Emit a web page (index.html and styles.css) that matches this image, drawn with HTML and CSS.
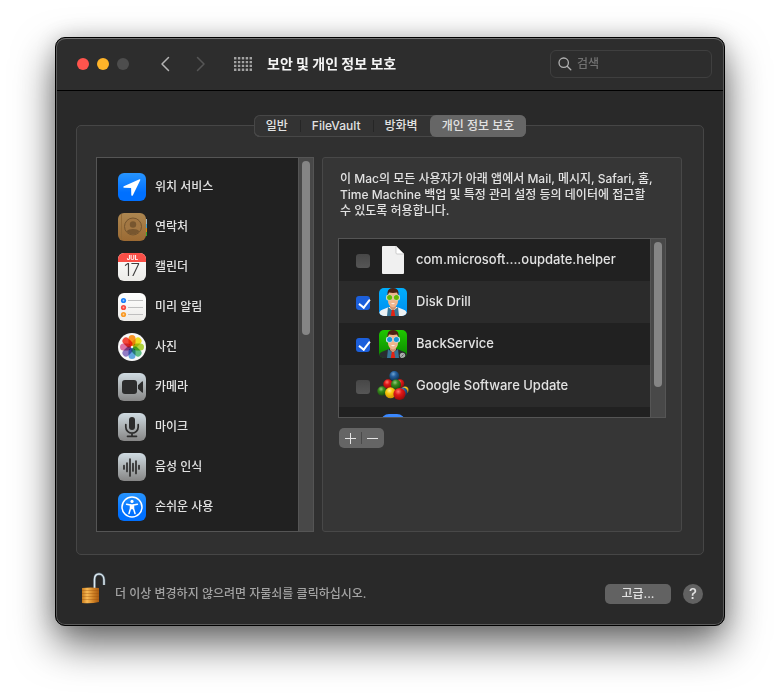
FILE: index.html
```html
<!DOCTYPE html>
<html lang="ko">
<head>
<meta charset="utf-8">
<title>보안 및 개인 정보 보호</title>
<link rel="stylesheet" href="styles.css">
</head>
<body>
<svg class="defs" aria-hidden="true">
  <defs>
    <linearGradient id="blue" x2="0" y2="1"><stop stop-color="#2795ff"/><stop offset=".7" stop-color="#0070ff"/></linearGradient>
    <linearGradient id="steel" x2="0" y2="1"><stop stop-color="#cfdbe2"/><stop offset=".5" stop-color="#abb0b2"/><stop offset="1" stop-color="#868686"/></linearGradient>
    <linearGradient id="paper" x2="0" y2="1"><stop stop-color="#fff"/><stop offset="1" stop-color="#ecebe8"/></linearGradient>
    <linearGradient id="leather" x2="0" y2="1"><stop stop-color="#ac8650"/><stop offset="1" stop-color="#9b6a33"/></linearGradient>
    <linearGradient id="sky" x2="0" y2="1"><stop stop-color="#00aefc"/><stop offset="1" stop-color="#008df0"/></linearGradient>
    <linearGradient id="grass" x2="0" y2="1"><stop stop-color="#1fc700"/><stop offset="1" stop-color="#0a8600"/></linearGradient>
    <linearGradient id="brass" x2="1" y2="0"><stop stop-color="#c67a1d"/><stop offset=".3" stop-color="#f9b954"/><stop offset=".65" stop-color="#d18427"/><stop offset="1" stop-color="#a85a10"/></linearGradient>
    <radialGradient id="ball-blue" cx=".4" cy=".3" r=".7"><stop stop-color="#6fa3d0"/><stop offset=".4" stop-color="#245f9e"/><stop offset="1" stop-color="#0f3155"/></radialGradient>
    <radialGradient id="ball-red" cx=".4" cy=".3" r=".7"><stop stop-color="#ff7a6c"/><stop offset=".4" stop-color="#e01818"/><stop offset="1" stop-color="#970a0a"/></radialGradient>
    <radialGradient id="ball-green" cx=".4" cy=".3" r=".7"><stop stop-color="#98c97a"/><stop offset=".4" stop-color="#378a1d"/><stop offset="1" stop-color="#1a4f0d"/></radialGradient>
    <radialGradient id="ball-yellow" cx=".4" cy=".3" r=".7"><stop stop-color="#ffee98"/><stop offset=".4" stop-color="#fbc90e"/><stop offset="1" stop-color="#cf9302"/></radialGradient>
    <clipPath id="tile"><rect width="28" height="28" rx="5"/></clipPath>
  </defs>
</svg>

<main class="window">
  <header class="titlebar">
    <div class="lights">
      <button class="light light-close" type="button" aria-label="닫기"></button>
      <button class="light light-min" type="button" aria-label="최소화"></button>
      <button class="light light-zoom" type="button" aria-label="확대" disabled></button>
    </div>
    <nav class="history">
      <button class="plain" type="button" aria-label="뒤로"><svg width="10" height="16" viewBox="0 0 10 16"><path d="M8.500 1.500 2 8l6.500 6.500" fill="none" stroke="#b4b4b4" stroke-width="1.500" stroke-linecap="round" stroke-linejoin="round"/></svg></button>
      <button class="plain" type="button" aria-label="앞으로" disabled><svg width="10" height="16" viewBox="0 0 10 16"><path d="M1.500 1.500 8 8l-6.500 6.500" fill="none" stroke="#565656" stroke-width="1.500" stroke-linecap="round" stroke-linejoin="round"/></svg></button>
    </nav>
    <button class="plain" type="button" aria-label="모두 보기">
      <svg width="18" height="14" viewBox="0 0 18 14"><path d="M0 1.300h18M0 5.100h18M0 8.900h18M0 12.700h18" stroke="#a3a3a3" stroke-width="2.400" stroke-dasharray="2.400 1.500"/></svg>
    </button>
    <h1 class="title">보안 및 개인 정보 보호</h1>
    <label class="search">
      <svg width="14" height="14" viewBox="0 0 14 14" fill="none" stroke="#b0b0b0" stroke-width="1.300" stroke-linecap="round"><circle cx="5.700" cy="5.700" r="4.700"/><path d="m9.200 9.200 3.600 3.600"/></svg>
      <input type="search" placeholder="검색" aria-label="검색">
    </label>
  </header>

  <div class="content">
    <div class="tabs" role="tablist">
      <button class="tab" type="button" role="tab">일반</button>
      <button class="tab" type="button" role="tab">FileVault</button>
      <button class="tab" type="button" role="tab">방화벽</button>
      <button class="tab tab-active" type="button" role="tab" aria-selected="true">개인 정보 보호</button>
    </div>

    <section class="group">
      <div class="pane categories">
        <ul class="category-list">
          <li><a class="category" href="#location">
            <svg class="icon" viewBox="0 0 28 28"><rect width="28" height="28" rx="6" fill="url(#blue)"/><path d="M21.500 6.200 5.800 13.200c-.9.500-.6 1.500.3 1.500l7 .2.200 7c.1 1 1.200 1.200 1.600.3L22.300 7c.2-.6-.2-1-.8-.8z" fill="#fff"/></svg>
            위치 서비스</a></li>
          <li><a class="category" href="#contacts">
            <svg class="icon" viewBox="0 0 28 28"><path d="M26 6h3v5h-3z" fill="#9fb7be"/><path d="M26 11h3v4h-3z" fill="#3f9fcb"/><path d="M26 15h3v4h-3z" fill="#d8860f"/><path d="M26 19h3v4h-3z" fill="#35a52c"/><rect width="28" height="28" rx="6" fill="url(#leather)"/><path d="M3.500 1v26" stroke="#946b37" stroke-width="1"/><g fill="#77562f"><circle cx="15" cy="13.500" r="8.500" fill="#a27743" stroke="#75552f"/><circle cx="15" cy="11.500" r="3.200"/><path d="M8.600 18.300c1.300-1.500 3.500-2.200 6.400-2.200s5.100.7 6.400 2.200a8 8 0 0 1-12.800 0z"/></g></svg>
            연락처</a></li>
          <li><a class="category" href="#calendar">
            <svg class="icon" viewBox="0 0 28 28"><rect width="28" height="28" rx="6" fill="url(#paper)"/><path d="M0 9V6a6 6 0 0 1 6-6h16a6 6 0 0 1 6 6v3z" fill="#fa4f47"/><text class="cal-month" x="14.500" y="7">JUL</text><text class="cal-day" x="14" y="23">17</text></svg>
            캘린더</a></li>
          <li><a class="category" href="#reminders">
            <svg class="icon" viewBox="0 0 28 28"><rect width="28" height="28" rx="6" fill="url(#paper)"/><path d="M10 7.500h15M10 14.500h15M10 21.500h15" stroke="#bfbfbf"/><circle cx="5.500" cy="7.500" r="2.600" fill="#1b80fa"/><circle cx="5.500" cy="14.500" r="2.600" fill="#f9483f"/><circle cx="5.500" cy="21.500" r="2.600" fill="#f99a25"/><g fill="#fff" opacity=".55"><circle cx="5.500" cy="7.500" r=".9"/><circle cx="5.500" cy="14.500" r=".9"/><circle cx="5.500" cy="21.500" r=".9"/></g></svg>
            미리 알림</a></li>
          <li><a class="category" href="#photos">
            <svg class="icon" viewBox="0 0 28 28"><circle cx="14" cy="14" r="14" fill="#f7f7f7"/><g class="petals">
              <rect x="10.500" y="2" width="7" height="11" rx="3.500" fill="#fb9524"/>
              <rect x="10.500" y="2" width="7" height="11" rx="3.500" fill="#ecdf21" transform="rotate(45 14 14)"/>
              <rect x="10.500" y="2" width="7" height="11" rx="3.500" fill="#aed23f" transform="rotate(90 14 14)"/>
              <rect x="10.500" y="2" width="7" height="11" rx="3.500" fill="#61bd85" transform="rotate(135 14 14)"/>
              <rect x="10.500" y="2" width="7" height="11" rx="3.500" fill="#62a6df" transform="rotate(180 14 14)"/>
              <rect x="10.500" y="2" width="7" height="11" rx="3.500" fill="#917bc4" transform="rotate(225 14 14)"/>
              <rect x="10.500" y="2" width="7" height="11" rx="3.500" fill="#dc73a4" transform="rotate(270 14 14)"/>
              <rect x="10.500" y="2" width="7" height="11" rx="3.500" fill="#f2493c" transform="rotate(315 14 14)"/></g></svg>
            사진</a></li>
          <li><a class="category" href="#camera">
            <svg class="icon" viewBox="0 0 28 28"><rect width="28" height="28" rx="6" fill="url(#steel)"/><rect x="4" y="7" width="15" height="14" rx="3" fill="#2c2c2c"/><path d="m20 12.200 4-3.700q1-.7 1 .5v10q0 1.200-1 .5l-4-3.700z" fill="#2c2c2c"/></svg>
            카메라</a></li>
          <li><a class="category" href="#microphone">
            <svg class="icon" viewBox="0 0 28 28"><rect width="28" height="28" rx="6" fill="url(#steel)"/><rect x="11" y="4" width="6" height="13" rx="3" fill="#2c2c2c"/><path d="M7.800 11.500V14a6.200 6.200 0 0 0 12.400 0v-2.500M14 20v3M9.500 23.300h9" fill="none" stroke="#2c2c2c" stroke-width="1.700" stroke-linecap="round"/></svg>
            마이크</a></li>
          <li><a class="category" href="#speech">
            <svg class="icon" viewBox="0 0 28 28"><rect width="28" height="28" rx="6" fill="url(#steel)"/><path d="M6 12.500v3.500M9 10v8.500M12 6v17M15 10.500v7.500M18 8v12.500M21 12.500v3.500" stroke="#2c2c2c" stroke-width="1.700" stroke-linecap="round"/></svg>
            음성 인식</a></li>
          <li><a class="category" href="#accessibility">
            <svg class="icon" viewBox="0 0 28 28"><rect width="28" height="28" rx="6" fill="url(#blue)"/><circle cx="14" cy="14" r="10" fill="none" stroke="#fff" stroke-width="1.500"/><circle cx="14" cy="8.400" r="1.600" fill="#fff"/><path d="M8.600 11.200 12.500 12v3.500l-1.500 5M19.400 11.200 15.500 12v3.500l1.500 5" fill="none" stroke="#fff" stroke-width="1.500" stroke-linecap="round" stroke-linejoin="round"/><path d="M12 11.300h4v5h-4z" fill="#fff"/></svg>
            손쉬운 사용</a></li>
        </ul>
        <div class="track"><div class="thumb thumb-categories"></div></div>
      </div>

      <div class="detail">
        <p class="explain">이 Mac의 모든 사용자가 아래 앱에서 Mail, 메시지, Safari, 홈, Time Machine 백업 및 특정 관리 설정 등의 데이터에 접근할 수 있도록 허용합니다.</p>
        <div class="pane apps">
          <ul class="app-list">
            <li><label class="app"><input class="check" type="checkbox">
              <svg class="icon" viewBox="0 0 28 28"><path d="M4 0h13l8 8v19q0 1-1 1H4q-1 0-1-1V1q0-1 1-1z" fill="#f0f0f0"/><path d="M17 0v7q0 1 1 1h7z" fill="#fff" stroke="#b9b9b9" stroke-width=".7"/></svg>
              <span class="app-name">com.microsoft....oupdate.helper</span></label></li>
            <li><label class="app"><input class="check" type="checkbox" checked>
              <svg class="icon" viewBox="0 0 28 28"><g clip-path="url(#tile)"><path d="M0 0h28v28H0z" fill="url(#sky)"/><path d="M0 28v-3q1-3 5-4l5-2h8l5 2q4 1 5 4v3z" fill="#eef1f3"/><path d="m9 19 5 4 5-4 1 9H8z" fill="#387596"/><path d="M11 16h6v4l-3 3-3-3z" fill="#cf9471"/><path d="m12.800 22h2.400l1 6h-4.400z" fill="#e32414"/><path d="M9 4h10v9q0 5-5 6.500-5-1.500-5-6.500z" fill="#efb68e"/><path d="M8.500 8V4.500Q9 0 14 0t5.500 4.500V8L18 4.500q-4 .8-8 0z" fill="#4b2112"/><rect x="7" y="6.800" width="6.400" height="5.600" rx="2" fill="#cfd6bd"/><rect x="14.600" y="6.800" width="6.400" height="5.600" rx="2" fill="#cfd6bd"/><circle cx="10.600" cy="9.600" r="2.500" fill="#64b900"/><circle cx="17.400" cy="9.600" r="2.500" fill="#64b900"/><path d="M12 15.300h4q-2 1.800-4 0z" fill="#fff"/></g></svg>
              <span class="app-name">Disk Drill</span></label></li>
            <li><label class="app"><input class="check" type="checkbox" checked>
              <svg class="icon" viewBox="0 0 28 28"><g clip-path="url(#tile)"><path d="M0 0h28v28H0z" fill="url(#grass)"/><path d="M0 28v-3q1-3 5-4l5-2h8l5 2q4 1 5 4v3z" fill="#292d2e"/><path d="m9 19 5 4 5-4 1 9H8z" fill="#387596"/><path d="M11 16h6v4l-3 3-3-3z" fill="#cf9471"/><path d="m12.800 22h2.400l1 6h-4.400z" fill="#e32414"/><path d="M9 4h10v9q0 5-5 6.500-5-1.500-5-6.500z" fill="#efb68e"/><path d="M8.500 8V4.500Q9 0 14 0t5.500 4.500V8L18 4.500q-4 .8-8 0z" fill="#4b2112"/><rect x="7" y="6.800" width="6.400" height="5.600" rx="2" fill="#c6e2ea"/><rect x="14.600" y="6.800" width="6.400" height="5.600" rx="2" fill="#c6e2ea"/><circle cx="10.600" cy="9.600" r="2.500" fill="#1694d9"/><circle cx="17.400" cy="9.600" r="2.500" fill="#1694d9"/><path d="M12 15.300h4q-2 1.800-4 0z" fill="#fff"/><circle cx="23.500" cy="25.500" r="2.700" fill="#a8aaa9"/><path d="m22.500 26.500 2-2" stroke="#606462"/></g></svg>
              <span class="app-name">BackService</span></label></li>
            <li><label class="app"><input class="check" type="checkbox">
              <svg class="icon" viewBox="0 0 28 28"><circle cx="26" cy="18" r="3.500" fill="url(#ball-yellow)"/><circle cx="24" cy="20" r="4.500" fill="url(#ball-blue)"/><circle cx="21" cy="11.500" r="4.300" fill="url(#ball-red)"/><circle cx="15.300" cy="4" r="4.900" fill="url(#ball-blue)"/><circle cx="9" cy="12" r="4.700" fill="url(#ball-red)"/><circle cx="3" cy="19" r="4.700" fill="url(#ball-green)"/><circle cx="17" cy="12.500" r="5" fill="url(#ball-green)"/><circle cx="11.500" cy="20.800" r="5.500" fill="url(#ball-yellow)"/><circle cx="20.500" cy="22" r="6.100" fill="url(#ball-red)"/></svg>
              <span class="app-name">Google Software Update</span></label></li>
            <li><label class="app"><input class="check" type="checkbox" aria-label="앱">
              <svg class="icon" viewBox="0 0 28 28"><rect x="2" width="24" height="26" rx="8" fill="#3b88fd"/></svg></label></li>
          </ul>
          <div class="track"><div class="thumb thumb-apps"></div></div>
        </div>
        <div class="stepper">
          <button class="step" type="button" aria-label="추가"><svg width="11" height="11" viewBox="0 0 11 11"><path d="M5.500 0v11M0 5.500h11" stroke="#e4e4e4"/></svg></button>
          <button class="step" type="button" aria-label="제거"><svg width="11" height="11" viewBox="0 0 11 11"><path d="M0 5.500h11" stroke="#e4e4e4"/></svg></button>
        </div>
      </div>
    </section>

    <footer class="footer">
      <button class="plain" type="button" aria-label="자물쇠">
        <svg width="24" height="31" viewBox="0 0 24 31"><path d="M12.500 15V6.500C12.500 2.500 14.500 1 17 1s5 2 5 6v5" fill="none" stroke="#53616b" stroke-width="2.800"/><path d="M12.500 15V6.500C12.500 2.500 14.500 1 17 1s5 2 5 6v5" fill="none" stroke="#dce8f0" stroke-width="1.500"/><path d="M0 15q9-1 17 0v14q-8 2-17 1z" fill="url(#brass)"/><path d="M0 17.500h17M0 20.500h17M0 23.500h17M0 26.500h17" stroke="#9c4f0c" stroke-width=".8" opacity=".45"/></svg>
      </button>
      <p class="hint">더 이상 변경하지 않으려면 자물쇠를 클릭하십시오.</p>
      <button class="advanced" type="button">고급...</button>
      <button class="help" type="button" aria-label="도움말">?</button>
    </footer>
  </div>
</main>
</body>
</html>
```
FILE: styles.css
```css
* {
  box-sizing: border-box;
}

body {
  margin: 0;
  padding: 37px 55px 73px;
  background: #fff;
  color: #e2e2e2;
  font: 500 12px/16px Inter, "Noto Sans CJK KR", sans-serif;
}

button,
input {
  margin: 0;
  padding: 0;
  border: 0;
  background: none;
  color: inherit;
  font: inherit;
}

ul,
p,
h1 {
  margin: 0;
  padding: 0;
  list-style: none;
}

svg {
  display: block;
  overflow: visible;
}

.defs {
  position: absolute;
  width: 0;
  height: 0;
}

.window {
  border: 1px solid #000;
  border-radius: 10px;
  background: #292929;
  box-shadow: inset 0 0 0 1px #5a5a5a, 0 18px 40px rgba(0, 0, 0, 0.6), 0 0 20px rgba(0, 0, 0, 0.15);
}

/* Title bar */

.titlebar {
  display: flex;
  align-items: center;
  height: 53px;
  margin: 0 1px;
  padding: 0 11px 2px 20px;
  border-top: 1px solid #747474;
  border-bottom: 1px solid #000;
  border-radius: 9px 9px 0 0;
  background: #2d2d2d;
}

.lights {
  display: flex;
  gap: 8px;
}

.light {
  width: 12px;
  height: 12px;
  border-radius: 50%;
}

.light-close {
  background: #ff544d;
}

.light-min {
  background: #ffb429;
}

.light-zoom {
  background: #4d4d4d;
}

.history {
  display: flex;
  gap: 26px;
  margin: 0 28px 0 31px;
}

.title {
  flex: 1;
  margin-left: 15px;
  color: #f4f4f4;
  font-size: 14px;
  font-weight: 700;
  line-height: 20px;
}

.search {
  display: flex;
  align-items: center;
  gap: 5px;
  width: 162px;
  height: 28px;
  padding: 0 7px;
  border: 1px solid #3f3f3f;
  border-radius: 6px;
}

.search input {
  flex: 1;
  min-width: 0;
  outline: 0;
}

.search input::placeholder {
  color: #727272;
}

/* Tabs */

.content {
  padding: 24px 20px 21px;
}

.tabs {
  position: relative;
  display: flex;
  width: fit-content;
  height: 22px;
  margin: 0 auto -12px;
  border-radius: 6px;
  background: #333;
  box-shadow: inset 0 0 0 1px #474747, inset 0 -1px 0 #606060;
}

.tab {
  padding: 0 12px;
}

.tab + .tab:not(.tab-active) {
  background: linear-gradient(#262626, #262626) left center / 1px 12px no-repeat;
}

.tab-active {
  border-radius: 6px;
  background: #666;
}

/* Group box */

.group {
  display: flex;
  gap: 8px;
  padding: 31px 21px 22px 19px;
  border: 1px solid #464646;
  border-radius: 5px;
  background: #303030;
}

.pane {
  display: flex;
  border: 1px solid #555;
  background: #212121;
}

.track {
  flex: none;
  width: 15px;
  padding: 3px;
  border-left: 1px solid #555;
  background: #484848;
}

.thumb {
  width: 8px;
  border-radius: 4px;
  background: #858585;
}

.thumb-categories {
  height: 174px;
}

.thumb-apps {
  height: 145px;
}

.icon {
  flex: none;
  width: 28px;
  height: 28px;
}

.categories {
  flex: none;
  width: 218px;
}

.category-list {
  flex: 1;
  padding: 9px 0 4px 21px;
}

.category {
  display: flex;
  align-items: center;
  gap: 9px;
  height: 40px;
  color: inherit;
  text-decoration: none;
}

.cal-month {
  fill: #fff;
  font-size: 6px;
  font-weight: 700;
  text-anchor: middle;
}

.cal-day {
  fill: #404040;
  font-size: 17px;
  font-weight: 300;
  text-anchor: middle;
}

.petals {
  isolation: isolate;
}

.petals rect {
  mix-blend-mode: multiply;
}

.detail {
  flex: 1;
  min-width: 0;
  padding: 13px 15px;
  border: 1px solid #484848;
  border-radius: 3px;
  background: #363636;
}

.explain {
  padding: 0 10px 0 2px;
}

.apps {
  height: 180px;
  margin-top: 19px;
  overflow: hidden;
}

.app-list {
  flex: 1;
}

.app-list li:nth-child(even) {
  background: #2b2b2b;
}

.app {
  display: flex;
  align-items: center;
  height: 42px;
  padding-left: 17px;
}

.app .icon {
  margin: 0 9px;
}

.app-name {
  padding-bottom: 2px;
  font-size: 13px;
}

.check {
  appearance: none;
  width: 14px;
  height: 14px;
  margin-top: 2px;
  border-radius: 3px;
  background: linear-gradient(#474747, #565656);
}

.check:checked {
  background: #1c5fdb;
}

.check:checked::before {
  content: "";
  display: block;
  width: 5px;
  height: 9px;
  margin: 1px 0 0 5px;
  border: solid #fff;
  border-width: 0 2px 2px 0;
  transform: rotate(38deg);
}

.stepper {
  display: flex;
  width: fit-content;
  height: 20px;
  margin: 10px 0 0 1px;
  border-radius: 5px;
  background: #656565;
}

.step {
  display: grid;
  place-items: center;
  width: 22px;
}

.step + .step {
  width: 23px;
  background: linear-gradient(#4a4a4a, #4a4a4a) left center / 1px 12px no-repeat;
}

/* Footer */

.footer {
  display: flex;
  align-items: flex-end;
  margin-top: 18px;
  padding: 0 1px 0 6px;
}

.hint {
  flex: 1;
  margin-left: 9px;
  color: #a3a3a3;
  line-height: 20px;
}

.advanced {
  width: 66px;
  height: 20px;
  border-radius: 5px;
  background: #626262;
}

.help {
  width: 20px;
  height: 20px;
  margin-left: 12px;
  border-radius: 50%;
  background: #626262;
  font-size: 15px;
}
```
